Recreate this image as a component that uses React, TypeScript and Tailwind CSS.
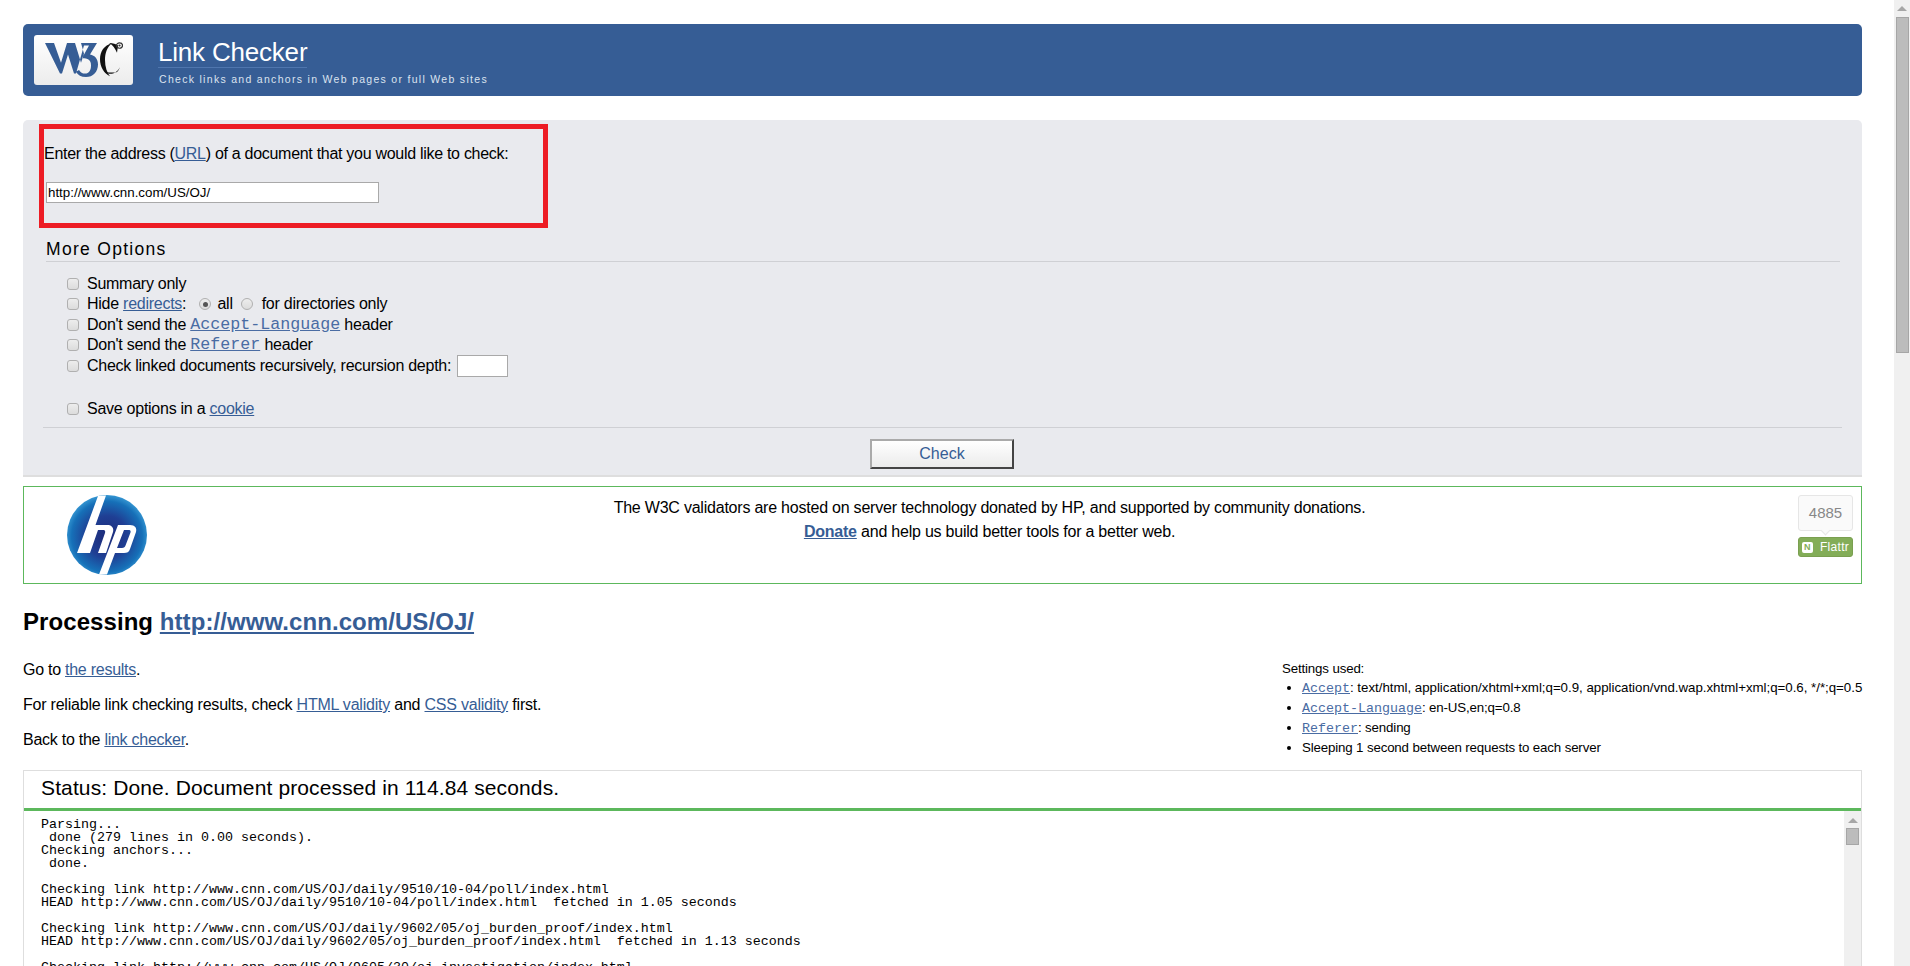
const sans = "font-['Liberation_Sans',Arial,sans-serif]";

function W3CLogo() {
  return (
    <div className="flex h-[50px] w-[99px] items-center justify-center rounded-[3px] bg-gradient-to-b from-white to-[#ececec]">
      <svg width="78" height="36" viewBox="0 0 78 40" preserveAspectRatio="none" aria-label="W3C">
        <path d="M0 1h9l7 22 6-22h8l6 22 3-10 -3-12h16l-7 13c5 1 8 5 8 11 0 8-5 14-12 14-5 0-8-2-10-6l3-2c2 3 3 4 6 4 4 0 6-4 6-9 0-6-3-8-9-8l7-14h-5l-8 31h-2l-6-21-6 21h-2z" fill="#365d95" />
        <path d="M67 1c-8 3-12 9-12 18 0 9 4 16 10 19 -3-4-5-10-5-18 0-8 2-14 7-19z" fill="#111" />
        <path d="M60 33c4 4 11 3 15-5-2 5-3 6-7 6-3 0-5 0-8-1zM64 1c4 0 7 1 9 3l-1 8c-2-5-4-9-8-11z" fill="#111" />
        <circle cx="74.5" cy="4" r="3" fill="none" stroke="#333" strokeWidth="1.2" />
        <circle cx="74.5" cy="4" r="1.1" fill="#333" />
      </svg>
    </div>
  );
}

function HpLogo() {
  return (
    <svg width="80" height="80" viewBox="0 0 80 80" aria-label="hp">
      <defs>
        <radialGradient id="hpBlue" cx="50%" cy="52%" r="52%">
          <stop offset="0%" stopColor="#1d2a78" />
          <stop offset="50%" stopColor="#1f3f94" />
          <stop offset="85%" stopColor="#1670b8" />
          <stop offset="100%" stopColor="#3596d2" />
        </radialGradient>
      </defs>
      <circle cx="40" cy="40" r="40" fill="url(#hpBlue)" />
      <path d="M31 1l8-0.5L28.500 30H40c5 0 7 3 6 7l-7 21h-8l7-20c0.500-2 0-3-2-3h-5l-8 23H10z" fill="#fff" />
      <path d="M51 30h12c5 0 7 3 6 7l-6 17c-1 3-3 4-6 4h-9l-8 21.500-8 0L51 30zM57 35l-7 18h5c2 0 3-1 3.500-2.500l5-13c0.500-2-0.500-2.500-2-2.500z" fill="#fff" fillRule="evenodd" />
    </svg>
  );
}

function Checkbox() {
  return <span className="mr-[8px] ml-[1px] inline-block h-[12px] w-[12px] shrink-0 rounded-[3px] border border-[#b0b0b0] bg-gradient-to-b from-[#ededed] to-[#dcdcdc]" />;
}

function Radio({ checked }: { checked?: boolean }) {
  return (
    <span className="inline-flex h-[12px] w-[12px] shrink-0 items-center justify-center rounded-full border border-[#b0b0b0] bg-gradient-to-b from-[#ededed] to-[#dcdcdc]">
      {checked && <span className="h-[5px] w-[5px] rounded-full bg-[#555]" />}
    </span>
  );
}

function A({ children, className = '' }: { children: React.ReactNode; className?: string }) {
  return <a href="#" className={`text-[#365d95] underline ${className}`}>{children}</a>;
}

function Code({ children, size = 'text-[16.67px]' }: { children: React.ReactNode; size?: string }) {
  return <a href="#" className={`font-['Liberation_Mono',monospace] tracking-normal text-[#4a6ca3] underline ${size}`}>{children}</a>;
}

const logLines = [
  'Parsing...',
  ' done (279 lines in 0.00 seconds).',
  'Checking anchors...',
  ' done.',
  '',
  'Checking link http://www.cnn.com/US/OJ/daily/9510/10-04/poll/index.html',
  'HEAD http://www.cnn.com/US/OJ/daily/9510/10-04/poll/index.html  fetched in 1.05 seconds',
  '',
  'Checking link http://www.cnn.com/US/OJ/daily/9602/05/oj_burden_proof/index.html',
  'HEAD http://www.cnn.com/US/OJ/daily/9602/05/oj_burden_proof/index.html  fetched in 1.13 seconds',
  '',
  'Checking link http://www.cnn.com/US/OJ/9605/30/oj.investigation/index.html',
];

export default function App() {
  return (
    <div className={`flex h-[966px] overflow-hidden bg-white text-[16px] tracking-[-0.26px] text-black ${sans}`}>
      <main className="min-w-0 flex-1 pt-[24px] pr-[32px] pl-[23px]">
        {/* Banner */}
        <header className="flex h-[72px] items-start rounded-[5px] bg-[#365d95] pt-[11px] pl-[11px]">
          <W3CLogo />
          <div className="ml-[25px] text-white">
            <h1 className="mt-[3px] w-fit border-b border-[#4f76ae] pb-[1px] text-[26px] leading-[28px] tracking-[-0.2px]">Link Checker</h1>
            <p className="mt-[5px] ml-[1px] text-[10.5px] leading-[13px] tracking-[1.3px] text-[#dbe3ef]">Check links and anchors in Web pages or full Web sites</p>
          </div>
        </header>

        {/* Form */}
        <section className="relative mt-[24px] h-[357px] rounded-t-[5px] border-b-2 border-[#dedede] bg-[#e9eaee] pt-[25px] pr-[22px] pl-[21px]">
          <p className="leading-[18px] tracking-[-0.29px]">Enter the address (<A>URL</A>) of a document that you would like to check:</p>
          <input readOnly value="http://www.cnn.com/US/OJ/" className="mt-[19px] ml-[2px] block h-[21px] w-[333px] border border-[#a9a9a9] bg-white px-[1px] text-[13.33px] tracking-normal outline-none" />
          <h2 className="mt-[36px] ml-[2px] border-b border-[#cfd0d4] pb-[2px] text-[17.5px] leading-[20px] tracking-[1.3px]">More Options</h2>
          <div className="mt-[12px] pl-[22px] leading-[20px]">
            <div className="flex h-[20.250px] items-center"><Checkbox />Summary only</div>
            <div className="flex h-[20.250px] items-center whitespace-pre">
              <Checkbox />Hide <A>redirects</A>: <span className="ml-[9px] flex items-center"><Radio checked /></span><span className="ml-[6px]">all</span><span className="ml-[8px] flex items-center"><Radio /></span><span className="ml-[9px]">for directories only</span>
            </div>
            <div className="flex h-[20.250px] items-center whitespace-pre"><Checkbox />Don't send the <Code>Accept-Language</Code> header</div>
            <div className="flex h-[20.250px] items-center whitespace-pre"><Checkbox />Don't send the <Code>Referer</Code> header</div>
            <div className="flex h-[21px] items-center whitespace-pre">
              <Checkbox />Check linked documents recursively, recursion depth: <input readOnly className="ml-[2px] h-[22px] w-[51px] border border-[#a9a9a9] bg-white outline-none" />
            </div>
            <div className="mt-[23px] flex h-[20px] items-center whitespace-pre"><Checkbox />Save options in a <A>cookie</A></div>
          </div>
          <div className="mt-[8px] -mr-[2px] -ml-[1px] border-t border-[#cfd0d4]" />
          <div className="mt-[11px] flex justify-center">
            <button className="h-[30px] w-[144px] border-t-2 border-r-2 border-b-2 border-l-2 border-t-[#aaa] border-r-[#444] border-b-[#444] border-l-[#aaa] bg-gradient-to-b from-white to-[#ebebeb] text-[16px] tracking-normal text-[#365d95]">Check</button>
          </div>
          {/* Red annotation box */}
          <div className="absolute top-[4px] left-[16px] h-[104px] w-[509px] border-[5px] border-[#ed1c24]" />
        </section>

        {/* Sponsor box */}
        <section className="relative mt-[9px] flex h-[98px] justify-center border border-[#5cb85c] pt-[9px] text-center leading-[24px] tracking-[-0.22px]">
          <div className="absolute top-[8px] left-[43px]"><HpLogo /></div>
          <div className="ml-[94px]">
            <p>The W3C validators are hosted on server technology donated by HP, and supported by community donations.</p>
            <p><A className="font-bold">Donate</A> and help us build better tools for a better web.</p>
          </div>
          <div className="absolute top-[8px] right-[8px] w-[55px] text-center tracking-normal">
            <div className="relative flex h-[36px] items-center justify-center rounded-[3px] border border-[#e6e6e6] bg-[#fafafa] text-[15px] text-[#888]">
              4885
              <span className="absolute -bottom-[4px] left-[23px] h-[7px] w-[7px] rotate-45 border-r border-b border-[#e6e6e6] bg-[#fafafa]" />
            </div>
            <div className="mt-[6px] flex h-[20px] items-center justify-center gap-[7px] rounded-[3px] border border-[#7a9f50] bg-[#83ad58] text-[12px] tracking-[0.3px] text-white">
              <span className="flex h-[11px] w-[11px] items-center justify-center rounded-[2px] bg-white text-[9px] leading-none font-bold text-[#83ad58]">N</span>
              Flattr
            </div>
          </div>
        </section>

        {/* Processing heading */}
        <h2 className="mt-[24px] text-[24px] leading-[28px] font-bold tracking-[0.07px]">Processing <A>http://www.cnn.com/US/OJ/</A></h2>

        <div className="mt-[25px] flex justify-between">
          <div className="leading-[18px]">
            <p>Go to <A>the results</A>.</p>
            <p className="mt-[17px] tracking-[-0.22px]">For reliable link checking results, check <A>HTML validity</A> and <A>CSS validity</A> first.</p>
            <p className="mt-[17px]">Back to the <A>link checker</A>.</p>
          </div>
          <div className="-mt-[2px] w-[580px] shrink-0 text-[13.3px] leading-[19px] tracking-[-0.15px] whitespace-nowrap">
            <p>Settings used:</p>
            <ul className="list-disc pl-[20px]">
              <li className="tracking-[-0.02px]"><Code size="text-[13.33px]">Accept</Code>: text/html, application/xhtml+xml;q=0.9, application/vnd.wap.xhtml+xml;q=0.6, */*;q=0.5</li>
              <li><Code size="text-[13.33px]">Accept-Language</Code>: en-US,en;q=0.8</li>
              <li><Code size="text-[13.33px]">Referer</Code>: sending</li>
              <li>Sleeping 1 second between requests to each server</li>
            </ul>
          </div>
        </div>

        {/* Status box */}
        <section className="mt-[13px] border border-[#dedede]">
          <h3 className="flex h-[40px] items-center border-b-[3px] border-[#5cb85c] pb-[3px] pl-[17px] text-[21px] tracking-[0.12px]">Status: Done. Document processed in 114.84 seconds.</h3>
          <div className="flex">
            <pre className="min-w-0 flex-1 pt-[7px] pl-[17px] font-['Liberation_Mono',monospace] text-[13.33px] leading-[13px] tracking-normal text-black">{logLines.join('\n')}</pre>
            <div className="flex h-[200px] w-[17px] flex-col items-center bg-[#f0f0f0] pt-[7px]">
              <span className="h-0 w-0 border-x-[5px] border-b-[5px] border-x-transparent border-b-[#a6a6a6]" />
              <span className="mt-[5px] h-[17px] w-[13px] border border-[#a6a6a6] bg-[#bcbcbc]" />
            </div>
          </div>
        </section>
      </main>

      {/* Page scrollbar */}
      <aside className="flex w-[16px] shrink-0 flex-col items-center bg-[#f0f0f0] pt-[6px]">
        <span className="h-0 w-0 border-x-[5px] border-b-[5px] border-x-transparent border-b-[#a6a6a6]" />
        <span className="mt-[6px] h-[336px] w-[13px] border border-[#a6a6a6] bg-[#bcbcbc]" />
      </aside>
    </div>
  );
}
